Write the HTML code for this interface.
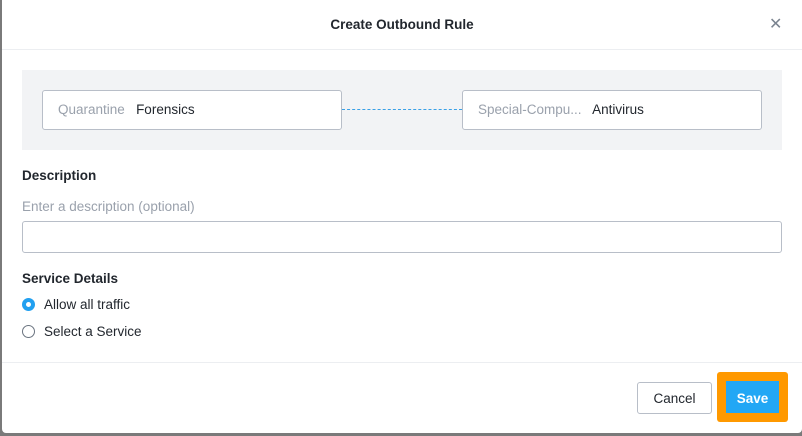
<!DOCTYPE html>
<html><head><meta charset="utf-8"><style>
*{box-sizing:border-box;margin:0;padding:0}
body{width:802px;height:436px;overflow:hidden;background:#7a7a7a;font-family:"Liberation Sans",sans-serif;position:relative}
.m{position:absolute;left:2px;top:0;width:800px;height:433px;background:#fff;border-radius:0 0 4px 4px}
.a{position:absolute}
.t{font-size:13.5px;color:#22272e}
.g{color:#9aa1ac}
.box{position:absolute;top:90px;height:40px;width:300px;border:1px solid #b8bec8;border-radius:3px;background:#fff;font-size:13.5px;line-height:38px;padding-left:15px;white-space:nowrap}
</style></head><body>
<div class="m"></div>
<div class="a t" style="left:0;width:804px;top:17px;text-align:center;font-weight:bold">Create Outbound Rule</div>
<div class="a" style="left:769px;top:14px;font-size:16px;color:#7b8490">✕</div>
<div class="a" style="left:2px;top:49px;width:800px;height:1px;background:#eceef1"></div>
<div class="a" style="left:22px;top:70px;width:760px;height:80px;background:#f2f3f5"></div>
<div class="box" style="left:42px"><span class="g">Quarantine</span>&nbsp;&nbsp; <span style="color:#22272e">Forensics</span></div>
<div class="a" style="left:342px;top:109px;width:120px;border-top:1px dashed #3aa0e6"></div>
<div class="box" style="left:462px"><span class="g">Special-Compu...</span>&nbsp;&nbsp; <span style="color:#22272e">Antivirus</span></div>
<div class="a t" style="left:22px;top:168px;font-weight:bold">Description</div>
<div class="a g" style="left:22px;top:199px;font-size:13.5px">Enter a description (optional)</div>
<div class="a" style="left:22px;top:221px;width:760px;height:32px;border:1px solid #b8bec8;border-radius:3px"></div>
<div class="a t" style="left:22px;top:271px;font-weight:bold">Service Details</div>
<div class="a" style="left:22px;top:298px;width:13px;height:13px;border-radius:50%;border:4px solid #22a0f0;background:#fff"></div>
<div class="a t" style="left:44px;top:297px">Allow all traffic</div>
<div class="a" style="left:22px;top:325px;width:13px;height:13px;border-radius:50%;border:1px solid #6b7480"></div>
<div class="a t" style="left:44px;top:324px">Select a Service</div>
<div class="a" style="left:2px;top:362px;width:800px;height:1px;background:#eceef1"></div>
<div class="a t" style="left:637px;top:382px;width:75px;height:32px;border:1px solid #b8bec8;border-radius:3px;text-align:center;line-height:32px">Cancel</div>
<div class="a" style="left:717px;top:372px;width:71px;height:50px;background:#ff9900;border-radius:3px"></div>
<div class="a" style="left:726px;top:381px;width:53px;height:32px;background:#22a7f5;color:#fff;font-size:13.5px;font-weight:bold;text-align:center;line-height:35px">Save</div>
</body></html>
